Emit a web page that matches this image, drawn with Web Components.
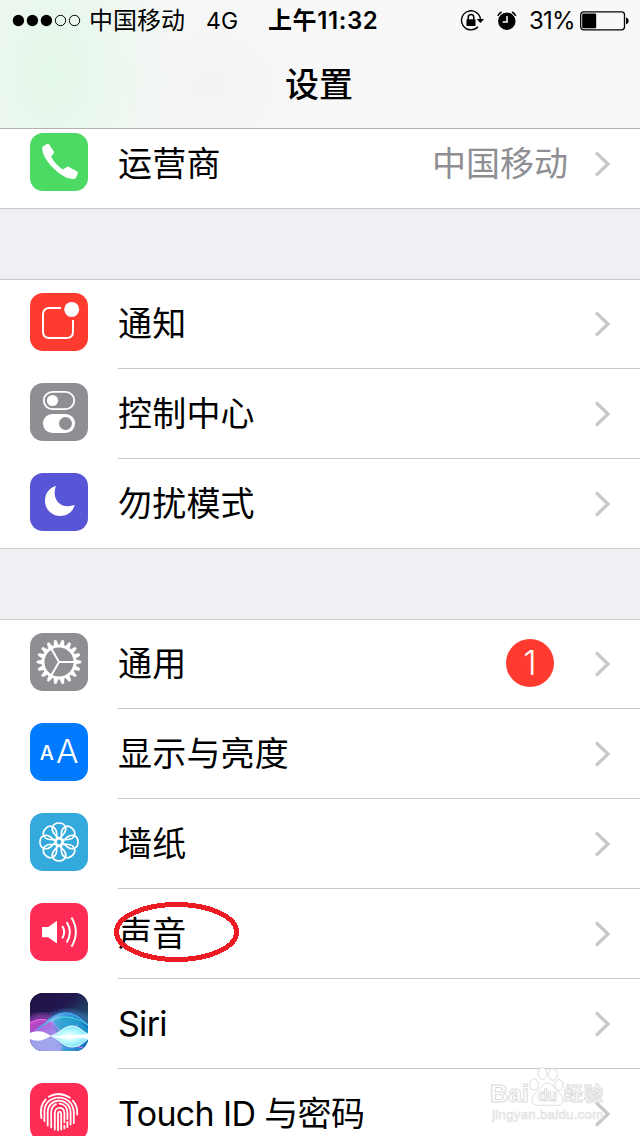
<!DOCTYPE html>
<html lang="zh-CN">
<head>
<meta charset="utf-8">
<title>设置</title>
<style>
    html, body {
        margin: 0;
        padding: 0;
    }
    body {
        width: 640px;
        height: 1136px;
        overflow: hidden;
        background: #efeff4;
        color: #000;
        font-family: Inter, "Noto Sans CJK SC", sans-serif;
    }
</style>
</head>
<body>
<settings-page>
    <nav-header slot="header" title-text="设置">
        <status-bar carrier="中国移动" network="4G" time="上午11:32" battery="31"></status-bar>
    </nav-header>
    <settings-group>
        <settings-row label="运营商" value="中国移动"><app-icon name="phone"></app-icon></settings-row>
    </settings-group>
    <settings-group>
        <settings-row label="通知"><app-icon name="notify"></app-icon></settings-row>
        <settings-row label="控制中心"><app-icon name="control"></app-icon></settings-row>
        <settings-row label="勿扰模式"><app-icon name="moon"></app-icon></settings-row>
    </settings-group>
    <settings-group>
        <settings-row label="通用" badge="1"><app-icon name="gear"></app-icon></settings-row>
        <settings-row label="显示与亮度"><app-icon name="display"></app-icon></settings-row>
        <settings-row label="墙纸"><app-icon name="wallpaper"></app-icon></settings-row>
        <settings-row label="声音" marked><app-icon name="sound"></app-icon></settings-row>
        <settings-row label="Siri" style="--label-spacing: -.7px"><app-icon name="siri"></app-icon></settings-row>
        <settings-row label="Touch ID 与密码" style="--label-spacing: -.65px"><app-icon name="touch"></app-icon></settings-row>
    </settings-group>
    <water-mark slot="overlay"></water-mark>
</settings-page>

<script>
    // 18 teeth around the ring
    let teeth = '';
    for (let i = 0; i < 18; i++) {
        teeth += `<path d="M45.5 26.7L50.9 28Q51.3 29 50.9 30L45.5 31.3Z" stroke="#fff" stroke-width=".5" transform="rotate(${i * 20} 29 29)"/>`;
    }

    // 8 overlapping petals
    let petals = '';
    for (let i = 0; i < 8; i++) {
        petals += `<path d="M29 25.7L24 20.5C20.5 16 22.5 10 29 10S37.5 16 34 20.5Z" transform="rotate(${i * 45} 29 29)"/>`;
    }

    const ICONS = {
        phone: ['#4cd964', `
            <path fill="#fff" d="M12.2 15.3C12.6 13.4 15.8 11 18.2 11.1C19 11.2 19.5 11.8 20 12.6L23.8 18.5C24.3 19.4 24.1 20 23.4 20.8L21.3 23.4C21.5 26.2 30 35.6 33.5 36.3L36.7 34C37.4 33.5 38 33.5 38.8 33.9L46.8 38.2C47.8 38.8 48.1 39.4 47.8 40.4L46 44.7C45.4 46 41.5 46.3 38.5 45.3C27.2 41.5 12 25.5 12.2 15.3Z"/>`],
        notify: ['#ff3b30', `
            <path d="M31 14.9H19.5Q13 14.9 13 21.4V38.5Q13 45 19.5 45H36.5Q43 45 43 38.5V27" fill="none" stroke="#fff" stroke-width="2"/>
            <circle cx="41.7" cy="16.4" r="7.5" fill="#fff"/>`],
        control: ['#8e8e93', `
            <rect x="13.8" y="8.8" width="30.4" height="17.4" rx="8.7" fill="none" stroke="#fff" stroke-width="1.8"/>
            <circle cx="22.5" cy="17.5" r="5.6" fill="#fff"/>
            <rect x="12.9" y="31" width="32.2" height="19" rx="9.5" fill="#fff"/>
            <circle cx="35.5" cy="40.5" r="6.5" fill="#8e8e93"/>`],
        moon: ['#5856d6', `
            <path fill="#fff" d="M26 13C21.5 23.5 28 37.2 44.8 32.1C43 38.5 37.3 43 30.3 43C21.8 43 15 36.3 15 28C15 20.4 19.3 14.7 26 13Z"/>`],
        gear: ['#8e8e93', `
            <g fill="#fff">${teeth}</g>
            <g fill="none" stroke="#fff">
                <circle cx="29" cy="29" r="15.9" stroke-width="2.7"/>
                <path d="M29 29H44M29 29L21.5 16M29 29L21.5 42" stroke-width="2"/>
            </g>`],
        display: ['#007aff', `
            <text x="9.8" y="37" font-size="20" font-weight="500" fill="#fff">A</text>
            <text x="25.9" y="40" font-size="32" font-weight="350" fill="#fff" textLength="22.5" lengthAdjust="spacingAndGlyphs">A</text>`],
        wallpaper: ['#34aadc', `
            <g fill="none" stroke="#fff" stroke-width="1.7">${petals}<circle cx="29" cy="29" r="3.3"/></g>`],
        sound: ['#ff2d55', `
            <path fill="#fff" d="M12 24H18.2L27 17.8V40.5L18.2 34.2H12Z"/>
            <path fill="none" stroke="#fff" stroke-width="2" d="M32.2 23.2Q36.3 29 32.2 35.4M36.7 19Q43.1 29 36.7 39.5M41.5 14.5Q50.2 29 41.5 43.8"/>`],
        siri: ['#13112f', `
            <defs>
                <linearGradient id="sky" x2="1" y2="1">
                    <stop offset="0" stop-color="#1e1144"/><stop offset=".4" stop-color="#22174f"/>
                    <stop offset=".75" stop-color="#1d5a6e"/><stop offset="1" stop-color="#148c91"/>
                </linearGradient>
                <linearGradient id="sea">
                    <stop offset="0" stop-color="#8d84dd"/><stop offset=".4" stop-color="#9aaef0"/>
                    <stop offset=".6" stop-color="#3f9bdc"/><stop offset="1" stop-color="#1272c2"/>
                </linearGradient>
                <linearGradient id="pink" x2="1" y2="1">
                    <stop offset="0" stop-color="#d23cc8"/><stop offset="1" stop-color="#8d8cf0" stop-opacity=".5"/>
                </linearGradient>
                <radialGradient id="glow">
                    <stop offset="0" stop-color="#fff"/><stop offset=".55" stop-color="#b5faff"/>
                    <stop offset="1" stop-color="#7de2fa"/>
                </radialGradient>
                <filter id="soft" x="-20%" y="-50%" width="140%" height="200%"><feGaussianBlur stdDeviation="2.5"/></filter>
            </defs>
            <rect width="58" height="58" fill="url(#sky)"/>
            <path d="M-4 32Q10 18 24 28" fill="none" stroke="#8a3fae" stroke-width="6" filter="url(#soft)"/>
            <path d="M20 26Q38 13 62 29" fill="none" stroke="#3a73b5" stroke-width="5" filter="url(#soft)"/>
            <path d="M0 39C12 34 21 20 35 20C45 20 51 26 58 32V58H0Z" fill="url(#sea)"/>
            <path d="M0 43H21C30 50 36 55 30 58H0Z" fill="#a3a5ee" opacity=".8"/>
            <path d="M0 30C10 24 20 25 28 36L34 45L0 43Z" fill="url(#pink)"/>
            <path d="M22 30C32 20 45 23 58 36V45H30Z" fill="#23a5cf" opacity=".6"/>
            <path d="M0 30C10 24 20 25 28 36C35 46 43 54 58 56" fill="none" stroke="#ef78ef"/>
            <path d="M7 37C18 30 23 20 35 20C45 20 51 26 58 32" fill="none" stroke="#42a9ed" stroke-width="1.4"/>
            <path d="M14 32C29 20 44 23 58 32" fill="none" stroke="#45e4dc"/>
            <path d="M24 58C35 49 36 37 48 32" fill="none" stroke="#c798fb" opacity=".7"/>
            <path d="M0 40C8 37 14 38 21 43C13 48 7 49 0 46Z" fill="#fff"/>
            <path d="M21 43C30 40 34 33 42 33C49 33 53 39 58 41V46C53 50 49 54 42 54C33 54 28 45 21 43Z" fill="url(#glow)"/>
            <path d="M21 43C33 42 42 43 58 41V46C44 43 34 48 21 43Z" fill="#fff"/>
            <path d="M21 43C30 40 34 33 42 33C49 33 53 39 58 41M21 43C28 45 33 54 42 54C49 54 53 50 58 46" fill="none" stroke="#f1ffff"/>`],
        touch: ['#ff2d55', `
            <g fill="none" stroke="#fff" stroke-width="1.8" stroke-linecap="round">
                <path d="M18.8 13.7Q29 7.8 40 14.7"/>
                <path d="M11.4 35.2C10.2 28 10.4 21.2 15.7 16.5M42.8 17.7C47 22 47.5 27 47.2 31.5"/>
                <path d="M14.4 38V28C15 10.2 42.5 9.6 43.8 29V40"/>
                <path d="M17.7 42.5V29C18.4 14 39.6 13.8 40.6 29V41.5"/>
                <path d="M21.2 44.5V29.5C21.3 26 23 22.5 26 21.2M29.5 20.6C34.8 21 37.4 25 37.4 29.8V36"/>
                <path d="M24.8 46.6V30C25 23.3 34 23.2 34.4 30V39.4M37.4 39V44"/>
                <path d="M28 47.3V31.2C28.2 27.8 31.2 28 31.2 31.2V46.6M34.4 43V45.4"/>
            </g>`]
    };

    class AppIcon extends HTMLElement {
        constructor() {
            super();
            const [color, shapes] = ICONS[this.getAttribute('name')];
            this._root = this.attachShadow({mode: 'open'});
            this._root.innerHTML = `
            <style>
                :host {
                    display: block;
                    width: 58px;
                    height: 58px;
                    border-radius: 13px;
                    overflow: hidden;
                    background: ${color};
                }
                svg { display: block; }
                text { font-family: Inter, sans-serif; }
            </style>
            <svg width="58" height="58" viewBox="0 0 58 58">${shapes}</svg>
            `;
        }
    }

    class StatusBar extends HTMLElement {
        constructor() {
            super();
            const battery = this.getAttribute('battery');
            this._root = this.attachShadow({mode: 'open'});
            this._root.innerHTML = `
            <style>
                :host {
                    display: flex;
                    align-items: center;
                    height: 41px;
                    padding: 0 12px;
                    line-height: 42px;
                    font-size: 24px;
                    font-weight: 380;
                    white-space: nowrap;
                }
                span, svg { flex: none; }
                .carrier { width: 117px; margin-left: 8px; }
                .network { width: 62px; font-size: 23px; letter-spacing: .2px; }
                .time { width: 192px; font-weight: 600; letter-spacing: .6px; }
                .percent { width: 51px; margin-left: 11px; letter-spacing: -.8px; }
                svg { display: block; }
            </style>
            <svg width="69" height="13" viewBox="0 0 69 13">
                <circle cx="6.4" cy="6.5" r="5.7"/><circle cx="20.4" cy="6.5" r="5.7"/><circle cx="34.4" cy="6.5" r="5.7"/>
                <circle cx="48.5" cy="6.5" r="5.2" fill="none" stroke="#000"/>
                <circle cx="62.5" cy="6.5" r="5.2" fill="none" stroke="#000"/>
            </svg>
            <span class="carrier">${this.getAttribute('carrier')}</span>
            <span class="network">${this.getAttribute('network')}</span>
            <span class="time">${this.getAttribute('time')}</span>
            <svg width="58" height="22" viewBox="0 0 58 22">
                <path d="M18 16.8A9.5 9.5 0 1 1 20.5 9.5" fill="none" stroke="#000" stroke-width="1.4"/>
                <path d="M16.7 9H24L20.4 13.1Z"/>
                <rect x="6.5" y="9.3" width="9" height="6.8" rx=".7"/>
                <path d="M8.2 10V7.2A2.8 2.8 0 0 1 13.8 7.2V10" fill="none" stroke="#000" stroke-width="1.5"/>
                <circle cx="46.8" cy="11.2" r="8.7"/>
                <path d="M37.8 6A10 10 0 0 1 41.5 2M52 2A10 10 0 0 1 55.8 6" fill="none" stroke="#000" stroke-width="1.5"/>
                <path d="M47 6V12H42.7" fill="none" stroke="#fff" stroke-width="1.5"/>
            </svg>
            <span class="percent">${battery}%</span>
            <svg width="50" height="20" viewBox="0 0 50 20">
                <rect x=".7" y=".8" width="43.8" height="18" rx="3" fill="none" stroke="#000" stroke-width="1.3"/>
                <rect x="2.2" y="2.4" width="${43.8 * battery / 100 + .4}" height="14.8" rx="1"/>
                <path d="M46 6.5C49.6 7 49.6 12.7 46 13.2Z"/>
            </svg>
            `;
        }
    }

    class NavHeader extends HTMLElement {
        constructor() {
            super();
            this._root = this.attachShadow({mode: 'open'});
            this._root.innerHTML = `
            <style>
                :host {
                    display: block;
                    box-sizing: border-box;
                    height: 129px;
                    border-bottom: 1px solid #b2b2b2;
                    background:
                        radial-gradient(ellipse 130px 190px at 52px 72px, #e4f7e8, #eaf7ed 38%, rgba(248, 248, 248, 0)),
                        radial-gradient(ellipse 110px 90px at 210px 85px, #f3f3f3, rgba(248, 248, 248, 0)),
                        #f8f8f8;
                }
                h1 {
                    margin: 0;
                    padding-right: 2px;
                    font-size: 34px;
                    font-weight: 500;
                    line-height: 88px;
                    text-align: center;
                }
            </style>
            <slot></slot>
            <h1>${this.getAttribute('title-text')}</h1>
            `;
        }
    }

    class SettingsRow extends HTMLElement {
        constructor() {
            super();
            const value = this.getAttribute('value') || '';
            const badge = this.getAttribute('badge');
            this._root = this.attachShadow({mode: 'open'});
            this._root.innerHTML = `
            <style>
                :host {
                    display: flex;
                    box-sizing: border-box;
                    height: 90px;
                    padding-left: 30px;
                }
                ::slotted(app-icon) { margin-top: 14px; flex: none; }
                .body {
                    position: relative;
                    display: flex;
                    align-items: center;
                    flex: 1;
                    box-sizing: border-box;
                    margin-left: 30px;
                    padding-right: 29px;
                    border-bottom: 1px solid #c8c7cc;
                    font-size: 34px;
                    /* just under 400, so the chinese glyphs take the thinner cut */
                    font-weight: 390;
                    line-height: 89px;
                    white-space: nowrap;
                }
                :host(:last-of-type) .body { border-bottom-color: transparent; }
                .label { flex: 1; letter-spacing: var(--label-spacing, .2px); }
                .value { margin-right: 26px; color: #8e8e93; }
                .badge {
                    width: 48px;
                    height: 48px;
                    margin: -2px 40px 0 0;
                    border-radius: 50%;
                    background: #ff3b30;
                    color: #fff;
                    font-weight: 350;
                    line-height: 48px;
                    text-align: center;
                }
                .chevron { display: block; flex: none; }
                .mark { position: absolute; left: -5px; top: 12px; }
            </style>
            <slot></slot>
            <div class="body">
                <span class="label">${this.getAttribute('label')}</span>
                ${value ? `<span class="value">${value}</span>` : ''}
                ${badge ? `<span class="badge">${badge}</span>` : ''}
                <svg class="chevron" width="17" height="26" viewBox="0 0 17 26">
                    <path d="M2 1.5L14 13L2 24.5" fill="none" stroke="#c7c7cc" stroke-width="3.2"/>
                </svg>
                ${this.hasAttribute('marked') ? `
                <svg class="mark" width="127" height="62" viewBox="0 0 127 62">
                    <ellipse cx="63.5" cy="31" rx="60" ry="27.5" fill="none" stroke="#ed1c24" stroke-width="5" shape-rendering="crispEdges"/>
                </svg>` : ''}
            </div>
            `;
        }
    }

    class SettingsGroup extends HTMLElement {
        constructor() {
            super();
            this._root = this.attachShadow({mode: 'open'});
            this._root.innerHTML = `
            <style>
                :host {
                    display: block;
                    flex: none;
                    background: #fff;
                    box-shadow: inset 0 1px #c8c7cc, inset 0 -1px #c8c7cc;
                }
            </style>
            <slot></slot>
            `;
        }
    }

    class SettingsPage extends HTMLElement {
        constructor() {
            super();
            this._root = this.attachShadow({mode: 'open'});
            this._root.innerHTML = `
            <style>
                :host {
                    display: flex;
                    flex-direction: column;
                    position: relative;
                    height: 1136px;
                    overflow: hidden;
                }
                ::slotted(nav-header) { position: relative; z-index: 1; flex: none; }
                /* list is scrolled slightly under the header */
                .list {
                    display: flex;
                    flex-direction: column;
                    gap: 70px;
                    margin-top: -10px;
                }
            </style>
            <slot name="header"></slot>
            <div class="list"><slot></slot></div>
            <slot name="overlay"></slot>
            `;
        }
    }

    class WaterMark extends HTMLElement {
        constructor() {
            super();
            this._root = this.attachShadow({mode: 'open'});
            this._root.innerHTML = `
            <style>
                :host {
                    position: absolute;
                    left: 488px;
                    top: 1064px;
                }
                svg { display: block; }
                text { font-family: "Liberation Sans", "Noto Sans CJK SC", sans-serif; font-weight: bold; }
            </style>
            <svg width="120" height="62" viewBox="0 0 120 62" fill="#fff" stroke="#dcdcdc" stroke-width="1">
                <text x="2" y="38" font-size="24" textLength="39" lengthAdjust="spacingAndGlyphs">Bai</text>
                <path d="M44 36C44 29 51 27 54 22C57 18 62 18 65 22C68 27 75 29 75 36C75 42 69 42 60 41C51 42 44 42 44 36Z"/>
                <ellipse cx="46" cy="20.5" rx="4.4" ry="5.7"/>
                <ellipse cx="54.5" cy="9.5" rx="4.4" ry="6"/>
                <ellipse cx="65" cy="10.5" rx="4.4" ry="5.8"/>
                <ellipse cx="71" cy="21" rx="4.2" ry="5.5"/>
                <text x="50" y="37" font-size="16" textLength="19">du</text>
                <text x="76" y="37" font-size="19" textLength="39">经验</text>
                <text x="4" y="55" font-size="13" textLength="111" style="font-weight:normal" stroke="#e0e0e0" stroke-width=".7">jingyan.baidu.com</text>
            </svg>
            `;
        }
    }

    window.customElements.define('app-icon', AppIcon);
    window.customElements.define('status-bar', StatusBar);
    window.customElements.define('nav-header', NavHeader);
    window.customElements.define('settings-row', SettingsRow);
    window.customElements.define('settings-group', SettingsGroup);
    window.customElements.define('settings-page', SettingsPage);
    window.customElements.define('water-mark', WaterMark);
</script>
</body>
</html>
